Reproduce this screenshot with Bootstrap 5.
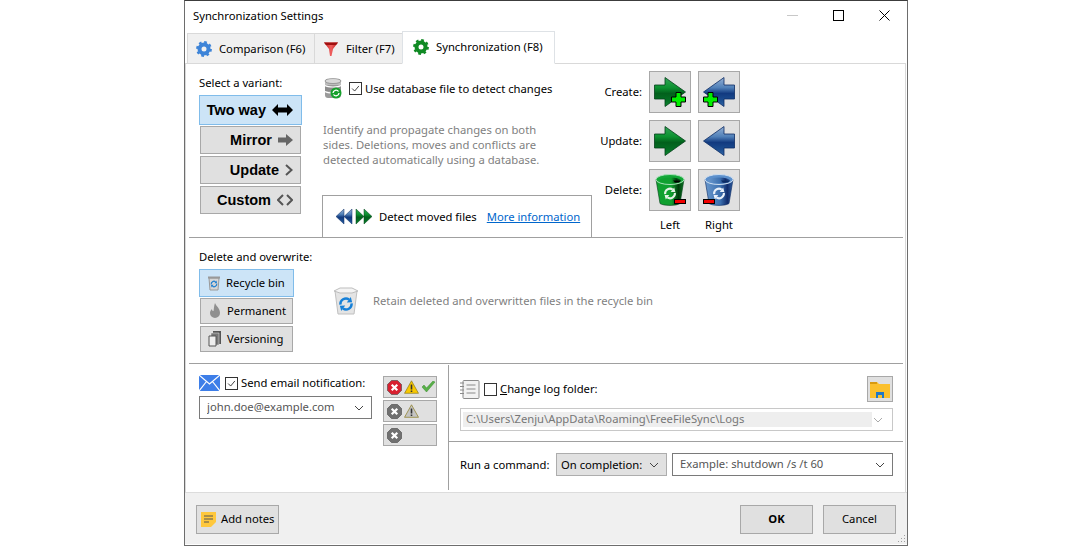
<!doctype html>
<html lang="en">
<head>
<meta charset="utf-8">
<title>Synchronization Settings</title>
<link href="https://cdn.jsdelivr.net/npm/bootstrap@5.3.0/dist/css/bootstrap.min.css" rel="stylesheet">
<style>
html,body{height:100%;margin:0;background:#fff;overflow:hidden}
body{font-family:"Noto Sans","Open Sans",sans-serif;font-size:11.25px;line-height:15px;color:#000}
.win{width:724px;height:546px;margin:0 0 0 184px;border:1px solid #6d6d6d;border-top-color:#3c3c3c;background:#fff}
.titlebar{height:30px;padding:0 0 2px 8px}
.wctl{width:46px;height:28px}
.tabrow{height:33px;padding-left:2px;border:0;margin-bottom:-1px}
.tabrow .nav-link{height:31px;margin:2px 0 0 -1px;padding:0 0 0 8px;border:1px solid #d9d9d9;border-radius:0;background:#f0f0f0;color:#000;font-size:11.25px;gap:7px;width:89px}
.tabrow .nav-link:first-child{margin-left:0;width:128px}
.tabrow .nav-link.active{height:33px;margin-top:0;background:#fff;border-bottom-color:#fff;color:#000;position:relative;padding:0 0 2px 10px;width:153px}
.sheet{height:429px;border-top:1px solid #d9d9d9;border-left:1px solid #d9d9d9;border-right:1px solid #d9d9d9;margin-right:1px;padding:0 2px 0 3px}
.sec-top{height:174px;border-bottom:1px solid #a0a0a0;padding-left:10px}
.sec-mid{height:126px;border-bottom:1px solid #a0a0a0;padding-left:10px;padding-top:11px}
.sec-bot{height:128px}
.col-variant{width:104px;padding-top:11px}
.gbtn{background:#e0e0e0;border:1px solid #a8a8a8;border-radius:0;color:#000;padding:0;--bs-btn-hover-bg:#e0e0e0;font-size:11.25px;line-height:15px}
.gbtn.on{background:#cce4f7;border-color:#80bcea}
.vbtn{width:101px;height:28px;margin:2px 0 0 1px;font:bold 14.5px/26px "Liberation Sans",Arial,sans-serif;padding-right:7px;gap:6px}
.vbtn.on{width:103px;height:30px;margin:5px 0 0 0;padding-right:8px}
.vbtn.on + .vbtn{margin-top:1px}
.col-center{width:270px;margin-left:19px;padding-top:14px}
.dbrow{height:22px;padding-left:2px;gap:7px}
.ck{width:13px;height:13px;border:1px solid #333;background:#fff;flex:none;display:block}
.upnudge{position:relative;top:-1px}
.desc{color:#7f7f7f;padding-left:1px;margin-top:22px;width:225px}
.movebox{height:42px;border-top:1px solid #a0a0a0;border-left:1px solid #a0a0a0;border-right:1px solid #a0a0a0;padding-left:13px}
.movebox a{color:#0066cc;margin-left:10px}
.arrows2{margin-right:7px}
.matrix{display:grid;grid-template-columns:50px 42px 42px;column-gap:7px;row-gap:7px;grid-auto-rows:42px;padding-top:7px}
.matrix .mlab{text-align:right;align-self:center;padding-bottom:2px}
.mbtn{width:42px;height:42px}
.matrix .foot{height:16px;text-align:center;margin-top:-1px}
.col-del{width:105px;flex:none}
.dbtn{width:93px;height:26px;margin:2px 0 0 1px;gap:5px;padding:0 0 2px 7px;justify-content:flex-start}
.dbtn svg{position:relative;top:1px}
.dbtn.on{width:95px;height:28px;margin:5px 0 0 0;padding:0 0 2px 7px}
.dbtn.on + .dbtn{margin-top:1px}
.nowrap-lab{white-space:nowrap}
.info2{color:#7f7f7f;gap:14px;padding:0 0 12px 29px}
.info2 svg{position:relative;top:1px}
.lefthalf{width:259px;padding:11px 0 0 10px}
.righthalf{flex:1;border-left:1px solid #a0a0a0;margin-top:1px;margin-bottom:2px}
.rowmail{gap:5px;height:16px}
.rowmail .lift{position:relative;top:-1px}
.sel{height:23px;border:1px solid #7a7a7a;border-radius:0;padding:0 20px 2px 7px;font-size:11.25px;line-height:19px;color:#555;background-color:#fff;background-position:right 7px center;background-size:10px 6px;background-repeat:no-repeat;background-image:url("data:image/svg+xml,%3Csvg xmlns='http://www.w3.org/2000/svg' viewBox='0 0 10 6'%3E%3Cpath d='M1 1l4 4 4-4' fill='none' stroke='%23444' stroke-width='1'/%3E%3C/svg%3E")}
.sel:focus{box-shadow:none;border-color:#7a7a7a}
.sel-mail{width:173px;margin-top:5px}
.filt{width:54px;height:22px;padding-left:3px;gap:2px;justify-content:flex-start;margin-bottom:2px}
.filtcol{margin-left:11px;margin-top:1px}
.logtop{height:77px;border-bottom:1px solid #a0a0a0;padding:11px 9px 0 11px}
.logrow{height:26px;gap:4px}
.logrow .lift{position:relative;top:-1px}
.folderbtn{width:26px;height:26px;margin-right:1px}
.pathbox{height:23px;border:1px solid #c8c8c8;margin-top:6px;padding:3px 20px 3px 2px;position:relative;width:433px;margin-left:0;background-position:right 9px center;background-size:10px 6px;background-repeat:no-repeat;background-image:url("data:image/svg+xml,%3Csvg xmlns='http://www.w3.org/2000/svg' viewBox='0 0 10 6'%3E%3Cpath d='M1 1l4 4 4-4' fill='none' stroke='%23aaa' stroke-width='1'/%3E%3C/svg%3E")}
.pathbox span{display:block;height:15px;background:#eee;color:#777;padding-left:3px;line-height:13px}
.runrow{padding:11px 9px 0 11px;gap:0}
.runlab{width:91px;flex:none;white-space:nowrap}
.sel-when{width:111px;background-color:#e1e1e1;border-color:#adadad;margin-left:5px;color:#000;padding:0 20px 0 4px;flex:none}
.sel-cmd{width:221px;margin-left:5px;flex:none}
.foot-bar{height:52px;background:#f0f0f0;border-top:1px solid #dcdcdc;padding:12px 11px 0 11px;position:relative}
.notes{width:83px;height:29px;gap:5px;padding:0 0 2px 4px;justify-content:flex-start}
.notes svg{position:relative;top:1px}
.okb{width:73px;height:29px;padding-bottom:2px}
.okb.pri{font-weight:700}
.okb.alt{margin-left:10px}
.grip{position:absolute;right:1px;bottom:1px}
</style>
</head>
<body>
<svg width="0" height="0" class="position-absolute">
<defs>
<linearGradient id="gg" x1="0" y1="0" x2="0" y2="1"><stop offset="0" stop-color="#34a458"/><stop offset=".35" stop-color="#0c9230"/><stop offset=".55" stop-color="#02601c"/><stop offset=".8" stop-color="#047024"/><stop offset="1" stop-color="#0c8a30"/></linearGradient>
<linearGradient id="gb" x1="0" y1="0" x2="0" y2="1"><stop offset="0" stop-color="#94b0d4"/><stop offset=".35" stop-color="#5080b8"/><stop offset=".55" stop-color="#123a80"/><stop offset=".8" stop-color="#1c4e90"/><stop offset="1" stop-color="#3468a8"/></linearGradient>
<linearGradient id="tg" x1="0" y1="0" x2="1" y2="0"><stop offset="0" stop-color="#10a030"/><stop offset=".55" stop-color="#10a030"/><stop offset=".8" stop-color="#003c0c"/><stop offset="1" stop-color="#0a7a24"/></linearGradient>
<linearGradient id="tb" x1="0" y1="0" x2="1" y2="0"><stop offset="0" stop-color="#6a98cc"/><stop offset=".55" stop-color="#3c70b0"/><stop offset=".8" stop-color="#102c6c"/><stop offset="1" stop-color="#3464a4"/></linearGradient>
<linearGradient id="fun" x1="0" y1="0" x2="1" y2="0"><stop offset="0" stop-color="#c01818"/><stop offset=".5" stop-color="#f06060"/><stop offset="1" stop-color="#c01818"/></linearGradient>
<symbol id="arrg" viewBox="0 0 32 30"><path d="M.5 8H11V.5L31.500 15 11 29.500V22H.5z" fill="url(#gg)" stroke="#04401a" stroke-width=".8"/></symbol>
<symbol id="arrb" viewBox="0 0 32 30"><path d="M31.500 8H21V.5L.5 15 21 29.500V22H31.500z" fill="url(#gb)" stroke="#0c2c64" stroke-width=".8"/></symbol>
<symbol id="plus" viewBox="0 0 15 15"><path d="M5 .5h5v4.500h4.500v5H10v4.500H5V10H.5V5H5z" fill="#00f000" stroke="#000"/></symbol>
<symbol id="minus" viewBox="0 0 12 5"><rect x=".5" y=".5" width="11" height="4" fill="#f00000" stroke="#000"/></symbol>
<symbol id="recycle" viewBox="0 0 12 12"><path d="M1.800 6.500A4.200 4.200 0 0 1 8.300 2.600M10.200 5.500A4.200 4.200 0 0 1 3.700 9.400" fill="none" stroke="currentColor" stroke-width="1.800"/><path d="M6.600 4.800L10.600 4.700 9.600.8zM5.400 7.200L1.400 7.300 2.400 11.200z" fill="currentColor"/></symbol>
<symbol id="gear" viewBox="0 0 16 16"><circle cx="8" cy="8" r="4.500" fill="none" stroke="currentColor" stroke-width="4"/><circle cx="8" cy="8" r="6.600" fill="none" stroke="currentColor" stroke-width="2.600" stroke-dasharray="2.600 2.580"/></symbol>
<symbol id="xo" viewBox="0 0 15 15"><path d="M4.500.5h6l4 4v6l-4 4h-6l-4-4v-6z" fill="currentColor" stroke="#444" stroke-width=".6"/><path d="M4.700 4.700l5.600 5.600m0-5.600l-5.600 5.600" stroke="#fff" stroke-width="2.200"/></symbol>
<symbol id="warn" viewBox="0 0 15 14"><path d="M7.500.8L14.500 13.300H.5z" fill="currentColor" stroke="#8a7a20" stroke-width=".7"/><path d="M7.500 4.500v5M7.500 10.500v1.600" stroke="#333" stroke-width="1.600"/></symbol>
</defs>
</svg>
<div class="win d-flex flex-column">
  <div class="titlebar d-flex align-items-center">
    <span>Synchronization Settings</span>
    <div class="ms-auto d-flex">
      <div class="wctl d-flex align-items-center justify-content-center"><svg width="11" height="11"><path d="M0 5.500h11" stroke="#c8c8c8"/></svg></div>
      <div class="wctl d-flex align-items-center justify-content-center"><svg width="11" height="11"><rect x=".5" y=".5" width="10" height="10" fill="none" stroke="#000"/></svg></div>
      <div class="wctl d-flex align-items-center justify-content-center"><svg width="11" height="11"><path d="M.5.500l10 10m0-10l-10 10" stroke="#000"/></svg></div>
    </div>
  </div>
  <nav class="nav nav-tabs tabrow flex-nowrap">
    <a class="nav-link d-flex align-items-center" href="#"><svg width="16" height="16" style="color:#3d84d8"><use href="#gear"/></svg>Comparison (F6)</a>
    <a class="nav-link d-flex align-items-center" href="#"><svg width="16" height="16"><path d="M1 1.500h14L10 8l-1.500 7h-1.500L6 8z" fill="url(#fun)"/><path d="M1 1.500h14l-2 2.500H3z" fill="#a01010"/></svg>Filter (F7)</a>
    <a class="nav-link active d-flex align-items-center" href="#"><svg width="16" height="16" style="color:#108a24"><use href="#gear"/></svg>Synchronization (F8)</a>
  </nav>
  <div class="sheet d-flex flex-column">
    <div class="sec-top d-flex">
      <div class="col-variant">
        <div>Select a variant:</div>
        <button class="btn gbtn vbtn on d-flex align-items-center justify-content-end">Two way <svg width="21" height="12" viewBox="0 0 21 12"><path d="M0 6L6 0v3.500h9V0l6 6-6 6V8.500H6V12z" fill="#000"/></svg></button>
        <button class="btn gbtn vbtn d-flex align-items-center justify-content-end">Mirror <svg width="15" height="12" viewBox="0 0 15 12"><path d="M0 3.500h8V0l7 6-7 6V8.500H0z" fill="#666"/></svg></button>
        <button class="btn gbtn vbtn d-flex align-items-center justify-content-end">Update <svg width="8" height="12" viewBox="0 0 8 12"><path d="M1 1l5.500 5L1 11" fill="none" stroke="#555" stroke-width="2"/></svg></button>
        <button class="btn gbtn vbtn d-flex align-items-center justify-content-end">Custom <svg width="16" height="12" viewBox="0 0 16 12"><path d="M6 1L1 6l5 5M10 1l5 5-5 5" fill="none" stroke="#555" stroke-width="2"/></svg></button>
      </div>
      <div class="col-center d-flex flex-column">
        <div class="dbrow d-flex align-items-center">
          <svg width="18" height="22" viewBox="0 0 18 22"><rect x="1" y="1" width="16" height="19" rx="3" fill="#9a9a9a"/><rect x="1" y="2" width="16" height="5" fill="#bdbdbd"/><rect x="1" y="8" width="16" height="5" fill="#8c8c8c"/><ellipse cx="9" cy="3" rx="8" ry="2.500" fill="#d8d8d8" stroke="#666" stroke-width=".5"/><path d="M1 7.500c3 2 13 2 16 0M1 13.500c3 2 13 2 16 0" fill="none" stroke="#fff" stroke-width="1.200"/><circle cx="12" cy="15" r="5.500" fill="#16a02c"/><path d="M9 15a3 3 0 0 1 5.500-1.500M15 15a3 3 0 0 1-5.500 1.500" fill="none" stroke="#fff" stroke-width="1.300"/></svg>
          <span class="d-flex align-items-center" style="gap:3px"><svg class="ck upnudge" viewBox="0 0 13 13"><path d="M2.500 6.500l3 3 5-6" fill="none" stroke="#222" stroke-width="1"/></svg><span class="upnudge">Use database file to detect changes</span></span>
        </div>
        <div class="desc">Identify and propagate changes on both sides. Deletions, moves and conflicts are detected automatically using a database.</div>
        <div class="movebox mt-auto d-flex align-items-center">
          <svg width="36" height="17" viewBox="0 0 36 17" class="arrows2"><path d="M0 8.500L8 1v15zM8 8.500L16 1v15z" fill="url(#gb)" stroke="#0c2c64" stroke-width=".5"/><path d="M20 1l8 7.500L20 16zM28 1l8 7.500L28 16z" fill="url(#gg)" stroke="#04401a" stroke-width=".5"/></svg>
          <span>Detect moved files</span><a href="#">More information</a>
        </div>
      </div>
      <div class="matrix">
        <div class="mlab">Create:</div>
        <button class="btn gbtn mbtn position-relative"><svg width="32" height="30" class="position-absolute top-50 start-50 translate-middle"><use href="#arrg"/></svg><svg width="15" height="15" class="position-absolute" style="right:4px;bottom:5px"><use href="#plus"/></svg></button>
        <button class="btn gbtn mbtn position-relative"><svg width="32" height="30" class="position-absolute top-50 start-50 translate-middle"><use href="#arrb"/></svg><svg width="15" height="15" class="position-absolute" style="left:4px;bottom:5px"><use href="#plus"/></svg></button>
        <div class="mlab">Update:</div>
        <button class="btn gbtn mbtn position-relative"><svg width="32" height="30" class="position-absolute top-50 start-50 translate-middle"><use href="#arrg"/></svg></button>
        <button class="btn gbtn mbtn position-relative"><svg width="32" height="30" class="position-absolute top-50 start-50 translate-middle"><use href="#arrb"/></svg></button>
        <div class="mlab">Delete:</div>
        <button class="btn gbtn mbtn position-relative"><svg width="30" height="33" viewBox="0 0 30 33" class="position-absolute top-50 start-50 translate-middle"><path d="M1 6l4 24c3 2.500 17 2.500 20 0L29 6z" fill="url(#tg)" stroke="#04401a" stroke-width=".6"/><ellipse cx="15" cy="6" rx="14" ry="5" fill="#13a838" stroke="#a8e0b8"/><ellipse cx="15" cy="7" rx="11" ry="3" fill="url(#tg)"/><path d="M18 7h8l-2 2H20z" fill="#000"/><svg x="8" y="13" width="14" height="14" style="color:#e4f2e6"><use href="#recycle"/></svg></svg><svg width="12" height="5" class="position-absolute" style="right:4px;bottom:6px"><use href="#minus"/></svg></button>
        <button class="btn gbtn mbtn position-relative"><svg width="30" height="33" viewBox="0 0 30 33" class="position-absolute top-50 start-50 translate-middle"><path d="M1 6l4 24c3 2.500 17 2.500 20 0L29 6z" fill="url(#tb)" stroke="#0c2c64" stroke-width=".6"/><ellipse cx="15" cy="6" rx="14" ry="5" fill="#5c90cc" stroke="#cfdff0"/><ellipse cx="15" cy="7" rx="11" ry="3" fill="url(#tb)"/><path d="M17 7h9l-2 2H19z" fill="#0c2c64"/><svg x="8" y="13" width="14" height="14" style="color:#e8f0fa"><use href="#recycle"/></svg></svg><svg width="12" height="5" class="position-absolute" style="left:4px;bottom:6px"><use href="#minus"/></svg></button>
        <div></div><div class="foot">Left</div><div class="foot">Right</div>
      </div>
    </div>
    <div class="sec-mid d-flex">
      <div class="col-del">
        <div class="nowrap-lab">Delete and overwrite:</div>
        <button class="btn gbtn dbtn on d-flex align-items-center"><svg width="14" height="16" viewBox="0 0 14 16"><path d="M2 3l1 12h8l1-12z" fill="#d6d6d6" stroke="#999"/><path d="M1 2.500h12" stroke="#999" stroke-width="2"/><svg x="3" y="5" width="8" height="8" style="color:#1d7fd0"><use href="#recycle"/></svg></svg>Recycle bin</button>
        <button class="btn gbtn dbtn d-flex align-items-center"><svg width="14" height="16" viewBox="0 0 14 16"><path d="M7 0c1 3 5 5 5 10a5 5 0 0 1-10 0c0-2 1-3 2-4 0 2 1 2 1.500 2C6 5 6 3 7 0z" fill="#8f8f8f"/></svg>Permanent</button>
        <button class="btn gbtn dbtn d-flex align-items-center"><svg width="14" height="16" viewBox="0 0 14 16"><path d="M5 0h8v13H5z" fill="#555"/><path d="M3 2h8v12H3z" fill="#777" stroke="#eee" stroke-width=".5"/><path d="M1 5h7v10H1z" fill="#eee" stroke="#555"/></svg>Versioning</button>
      </div>
      <div class="info2 d-flex align-items-center">
        <svg width="26" height="28" viewBox="0 0 26 28"><path d="M2 4l3 23h16l3-23z" fill="#e4e4e4" stroke="#c0c0c0"/><path d="M1 4l6-3h12l6 3-6 2H7z" fill="#f4f4f4" stroke="#bdbdbd"/><svg x="5" y="9" width="16" height="16" style="color:#1680d8"><use href="#recycle"/></svg></svg>
        <span>Retain deleted and overwritten files in the recycle bin</span>
      </div>
    </div>
    <div class="sec-bot d-flex">
      <div class="lefthalf d-flex">
        <div>
          <div class="rowmail d-flex align-items-center">
            <svg width="21" height="16" viewBox="0 0 21 16"><rect width="21" height="16" fill="#3d7ee8"/><path d="M0 0l10.500 9L21 0M0 16l7.500-9.500M21 16l-7.500-9.500" fill="none" stroke="#fff" stroke-width="1.200"/></svg>
            <span class="d-flex align-items-center" style="gap:3px"><svg class="ck" viewBox="0 0 13 13"><path d="M2.500 6.500l3 3 5-6" fill="none" stroke="#222" stroke-width="1"/></svg><span class="lift">Send email notification:</span></span>
          </div>
          <select class="form-select sel sel-mail"><option>john.doe@example.com</option></select>
        </div>
        <div class="filtcol d-flex flex-column">
          <button class="btn gbtn filt d-flex align-items-center"><svg width="15" height="15" style="color:#d82030"><use href="#xo"/></svg><svg width="15" height="14" style="color:#f8c800"><use href="#warn"/></svg><svg width="15" height="12" viewBox="0 0 15 12"><path d="M1 6l4.500 5L14 1l-2-1L5.500 7 3 4z" fill="#58b048" stroke="#3d8a30" stroke-width=".5"/></svg></button>
          <button class="btn gbtn filt d-flex align-items-center"><svg width="15" height="15" style="color:#707070"><use href="#xo"/></svg><svg width="15" height="14" style="color:#c4c4c4"><use href="#warn"/></svg></button>
          <button class="btn gbtn filt d-flex align-items-center"><svg width="15" height="15" style="color:#707070"><use href="#xo"/></svg></button>
        </div>
      </div>
      <div class="righthalf">
        <div class="logtop">
          <div class="logrow d-flex align-items-center">
            <svg width="20" height="19" viewBox="0 0 20 19"><rect x="3" y=".5" width="16" height="18" rx="1" fill="#f2f2f2" stroke="#8a8a8a"/><path d="M6.500 5h9M6.500 9h9M6.500 13h9M0 3h4M0 6.500h4M0 10h4M0 13.500h4" stroke="#8a8a8a" stroke-width="1.200"/></svg>
            <svg class="ck" viewBox="0 0 13 13"></svg>
            <span class="lift" style="margin-left:-1px"><u>C</u>hange log folder:</span>
            <button class="btn gbtn folderbtn ms-auto d-flex align-items-center justify-content-center"><svg width="20" height="17" viewBox="0 0 20 17"><path d="M0 1h7l2 2h11v14H0z" fill="#fbc02d"/><path d="M0 1h7v2H0z" fill="#d89a10"/><path d="M6 17v-6h8v6h-2v-3H8v3z" fill="#1f78c8"/></svg></button>
          </div>
          <div class="pathbox"><span>C:\Users\Zenju\AppData\Roaming\FreeFileSync\Logs</span></div>
        </div>
        <div class="runrow d-flex align-items-center">
          <span class="runlab">Run a command:</span>
          <select class="form-select sel sel-when"><option>On completion:</option></select>
          <select class="form-select sel sel-cmd"><option>Example: shutdown /s /t 60</option></select>
        </div>
      </div>
    </div>
  </div>
  <div class="foot-bar d-flex">
    <button class="btn gbtn notes d-flex align-items-center"><svg width="15" height="15" viewBox="0 0 15 15"><path d="M0 0h15v10l-5 5H0z" fill="#ffc83d"/><path d="M3 4h9M3 7h9M3 10h5" stroke="#555"/></svg>Add notes</button>
    <button class="btn gbtn okb pri ms-auto">OK</button>
    <button class="btn gbtn okb alt">Cancel</button>
    <svg class="grip" width="9" height="9" viewBox="0 0 9 9"><path d="M7 1h1v1H7zM4 4h1v1H4zM7 4h1v1H7zM1 7h1v1H1zM4 7h1v1H4zM7 7h1v1H7z" fill="#a0a0a0"/></svg>
  </div>
</div>
<script src="https://cdn.jsdelivr.net/npm/bootstrap@5.3.0/dist/js/bootstrap.bundle.min.js"></script>
</body>
</html>
